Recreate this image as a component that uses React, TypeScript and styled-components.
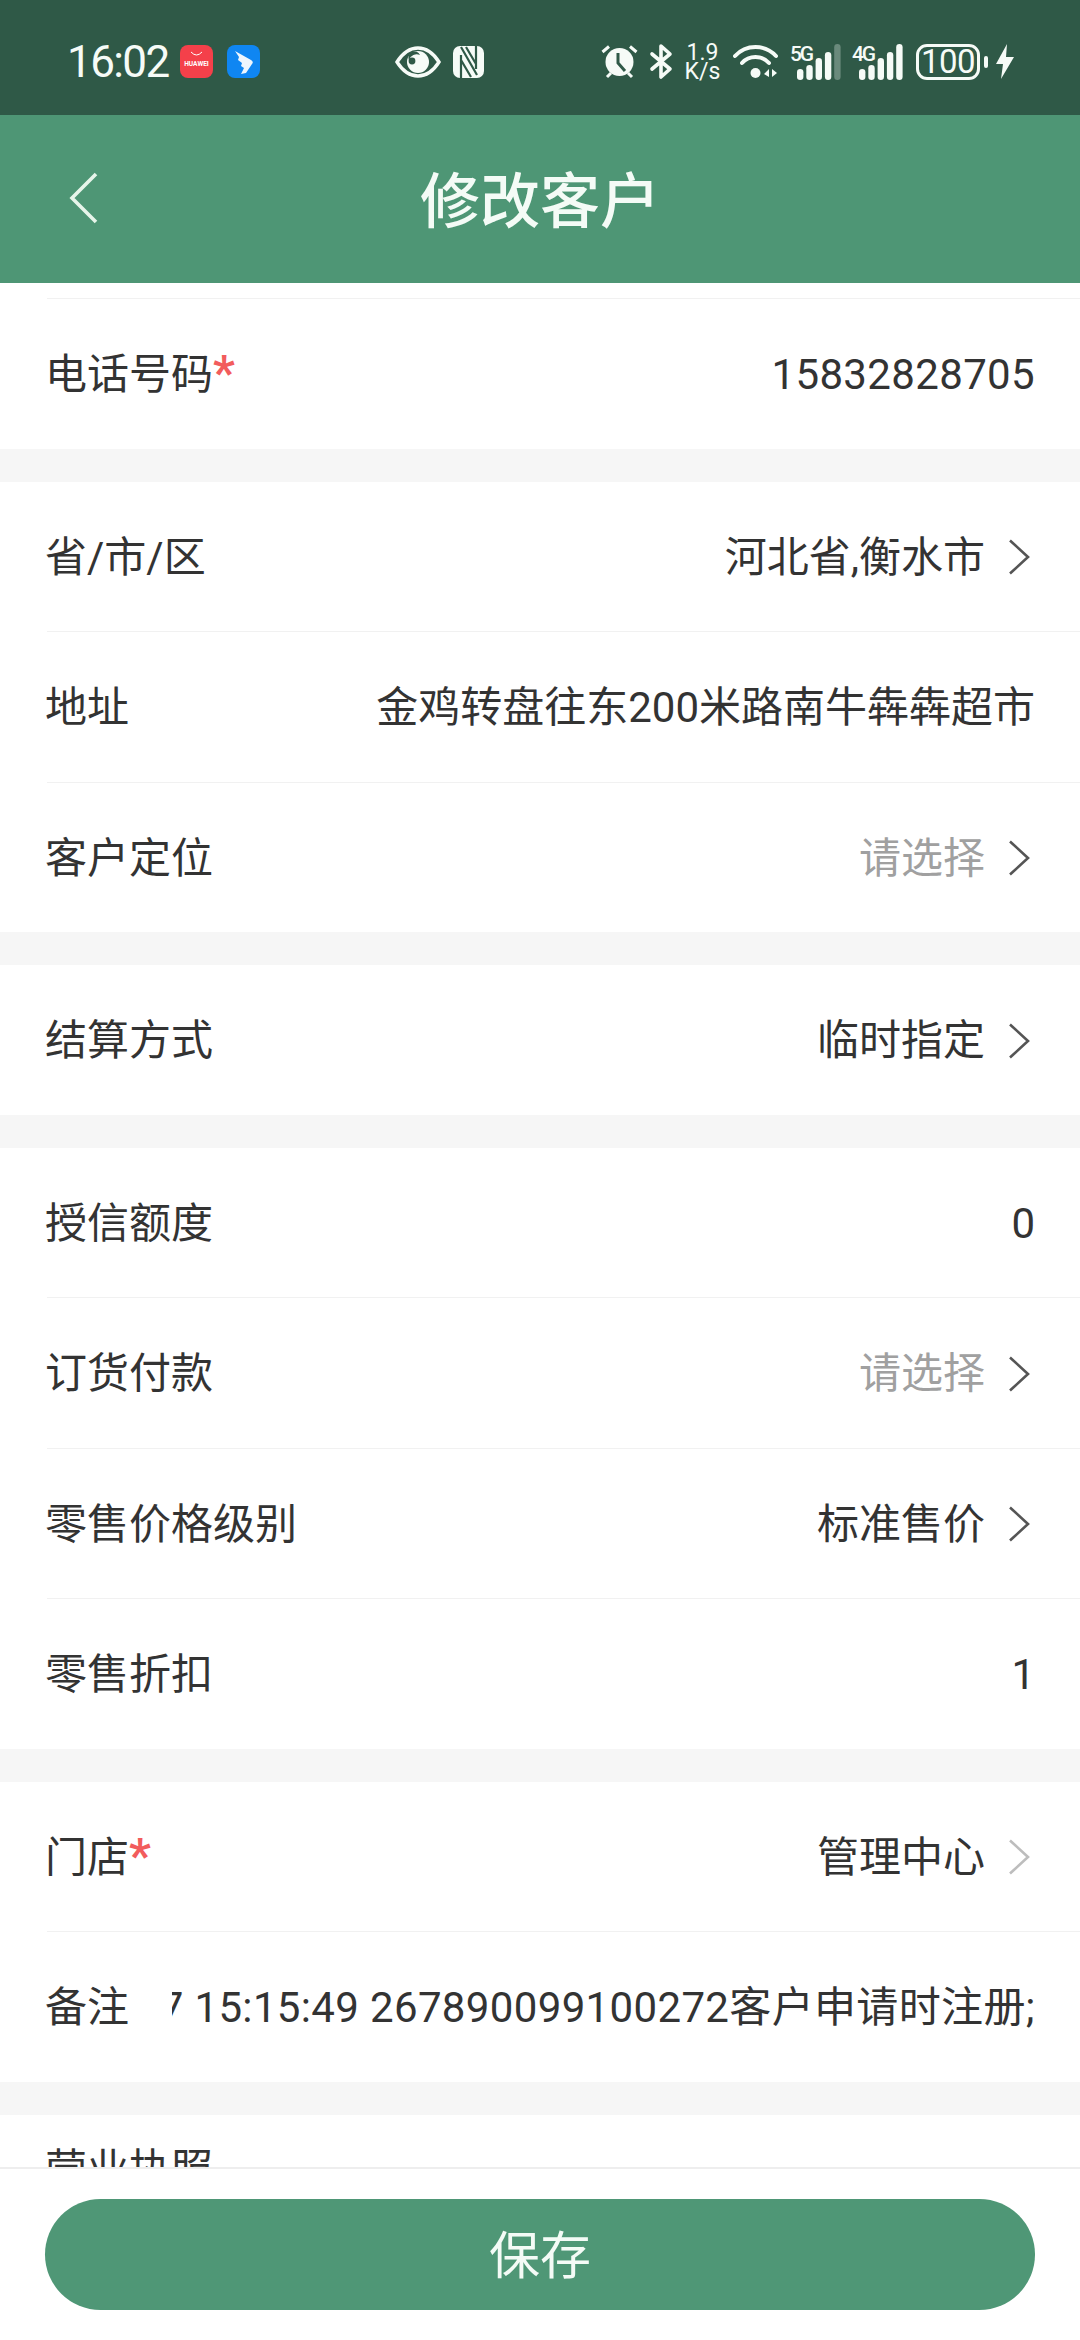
import React from 'react';
import styled, { createGlobalStyle } from 'styled-components';

const rowHeight = 149.5;

const GlobalStyle = createGlobalStyle`
  html, body {
    margin: 0;
    padding: 0;
    background: #ffffff;
  }
  * {
    box-sizing: border-box;
  }
`;

const Page = styled.div`
  width: 1080px;
  height: 2340px;
  display: flex;
  flex-direction: column;
  overflow: hidden;
  background: #f6f6f6;
  font-family: Roboto, 'Noto Sans CJK SC', sans-serif;
  color: #333333;
`;

const StatusBar = styled.div`
  height: 115px;
  flex-shrink: 0;
  background: #2f5947;
  color: #f6fbf7;
  display: flex;
  align-items: center;
  padding: 8px 0 0 67px;
  font-family: Roboto, sans-serif;
`;

const StatusCluster = styled.div<{ $left: number; $gap: number }>`
  display: flex;
  align-items: center;
  margin-left: ${(props) => props.$left}px;
  gap: ${(props) => props.$gap}px;
`;

const Clock = styled.span`
  font-size: 44px;
  width: 101px;
  line-height: 46px;
  letter-spacing: -1.6px;
  white-space: nowrap;
`;

const AppIcon = styled.svg`
  display: block;
  flex-shrink: 0;
  overflow: visible;
`;

const Speed = styled.div`
  width: 37px;
  display: flex;
  flex-direction: column;
  align-items: center;
  font-size: 23px;
  line-height: 19px;
`;

const Battery = styled.div`
  width: 64px;
  height: 36px;
  margin-left: 2px;
  border: 3px solid #f6fbf7;
  border-radius: 11px;
  display: flex;
  align-items: center;
  justify-content: center;
  font-size: 33px;
  letter-spacing: -0.5px;
`;

const BatteryNub = styled.div`
  width: 4px;
  height: 12px;
  border-radius: 2px;
  background: #f6fbf7;
  margin-left: -8px;
  margin-right: -4px;
`;

const Header = styled.header`
  height: 168px;
  flex-shrink: 0;
  background: #4e9675;
  display: flex;
  align-items: center;
  justify-content: center;
  position: relative;
`;

const BackButton = styled.button`
  position: absolute;
  left: 68px;
  top: 57px;
  padding: 0;
  border: none;
  background: none;
  display: flex;
`;

const Title = styled.h1`
  margin: 0 0 6px;
  font-size: 60px;
  font-weight: 500;
  color: #f4fbf6;
`;

const Body = styled.main`
  flex: 1;
  min-height: 0;
  overflow: hidden;
  display: flex;
  flex-direction: column;
  gap: 33px;
`;

const Group = styled.section`
  background: #ffffff;
  flex-shrink: 0;
`;

const ClippedRow = styled.div`
  height: 15px;
`;

const Row = styled.div`
  height: ${rowHeight}px;
  margin-left: 47px;
  padding-right: 45px;
  display: flex;
  align-items: center;
  box-sizing: content-box;

  & + &,
  ${ClippedRow} + & {
    border-top: 1px solid #f1f1f1;
  }
`;

const UploadRow = styled(Row)`
  align-items: flex-start;
  padding-top: 27px;
`;

const Label = styled.span`
  flex-shrink: 0;
  width: 127px;
  margin-left: -2px;
  padding-top: 3px;
  font-size: 42px;
  line-height: 50px;
  white-space: nowrap;
`;

const Required = styled.span`
  color: #f25c5c;
  font-size: 48px;
  font-weight: 700;
  line-height: 0;
`;

const Value = styled.div<{ $placeholder?: boolean }>`
  flex: 1;
  min-width: 0;
  display: flex;
  justify-content: flex-end;
  align-items: center;
  overflow: hidden;
  white-space: nowrap;
  padding-top: 3px;
  font-size: 42px;
  line-height: 50px;
  color: ${(props) => (props.$placeholder ? '#a0a0a0' : '#333333')};
`;

const ValueText = styled.span`
  flex-shrink: 0;
  letter-spacing: 0.35px;
`;

const Arrow = styled.svg`
  flex-shrink: 0;
  display: block;
  margin: 2px 5px 0 23px;
`;

const Footer = styled.footer`
  height: 173px;
  flex-shrink: 0;
  background: #ffffff;
  border-top: 2px solid #eeeeee;
  padding: 30px 45px 0;
`;

const SaveButton = styled.button`
  display: block;
  width: 100%;
  height: 111px;
  border: none;
  border-radius: 56px;
  padding: 0 0 6px;
  background: #4f9776;
  color: #f4fbf6;
  font-family: 'Noto Sans CJK SC', sans-serif;
  font-size: 51px;
`;

const Chevron = ({ faded }: { faded?: boolean }) => (
  <Arrow width="22" height="36" viewBox="0 0 22 36">
    <path
      d="M2 1.5 L20 18 L2 34.5"
      fill="none"
      stroke={faded ? '#bdbdbd' : '#555555'}
      strokeWidth="2.6"
    />
  </Arrow>
);

const HuaweiIcon = () => (
  <AppIcon width="33" height="33" viewBox="0 0 33 33">
    <rect width="33" height="33" rx="8" fill="#f4404a" />
    <path d="M11 7 Q16.5 13 22 7" fill="none" stroke="#ffffff" strokeWidth="1" />
    <text
      x="16.5"
      y="21"
      textAnchor="middle"
      fontSize="6.6"
      fontWeight="700"
      fontFamily="Roboto, sans-serif"
      fill="#ffffff"
    >
      HUAWEI
    </text>
  </AppIcon>
);

const DingIcon = () => (
  <AppIcon width="33" height="33" viewBox="0 0 33 33">
    <rect width="33" height="33" rx="8" fill="#0f86f2" />
    <path
      d="M8 6 L24 15 Q27 17 25 19 L19 28 L14 29 L17 23 L14 21 L15 18 L11 15 L12 12 Z"
      fill="#eef6fd"
    />
  </AppIcon>
);

const EyeIcon = () => (
  <AppIcon width="46" height="32" viewBox="0 0 46 32">
    <path
      d="M2 16 C9 5 16 2 23 2 C30 2 37 5 44 16 C37 27 30 30 23 30 C16 30 9 27 2 16 Z"
      fill="none"
      stroke="#f6fbf7"
      strokeWidth="3.4"
    />
    <circle cx="23" cy="16" r="11" fill="#f6fbf7" />
    <path d="M14 14 A8 8 0 0 1 25 9 A6 6 0 0 0 14 14 Z" fill="#2f5947" />
    <circle cx="17" cy="15" r="3.4" fill="#2f5947" />
  </AppIcon>
);

const NfcIcon = () => (
  <AppIcon width="31" height="32" viewBox="0 0 31 32">
    <rect width="31" height="32" rx="7" fill="#f6fbf7" />
    <path
      d="M8 9 V32 M8 1 L24 29 M13 1 L23 18 M23 0 V23 M8 14 L18 31"
      fill="none"
      stroke="#2f5947"
      strokeWidth="2.2"
    />
  </AppIcon>
);

const AlarmIcon = () => (
  <AppIcon width="37" height="35" viewBox="0 0 37 35">
    <circle cx="18.5" cy="18" r="14" fill="#f6fbf7" />
    <path d="M1.5 8 L8 2.5 M35.5 8 L29 2.5 M6 33 L10 29 M31 33 L27 29" stroke="#f6fbf7" strokeWidth="3" />
    <path d="M17 9 V19 L24 27" fill="none" stroke="#2f5947" strokeWidth="3" />
  </AppIcon>
);

const BluetoothIcon = () => (
  <AppIcon width="22" height="35" viewBox="0 0 22 35">
    <path
      d="M2 10 L20 25 L11 33 V2 L20 10 L2 25"
      fill="none"
      stroke="#f6fbf7"
      strokeWidth="3.6"
      strokeLinejoin="round"
      strokeLinecap="round"
    />
  </AppIcon>
);

const WifiIcon = () => (
  <AppIcon width="45" height="35" viewBox="0 0 45 35">
    <path d="M2 12 C13 0 32 0 43 12" fill="none" stroke="#f6fbf7" strokeWidth="4" strokeLinecap="round" />
    <path d="M9 19 C16 11 29 11 36 19" fill="none" stroke="#f6fbf7" strokeWidth="4" strokeLinecap="round" />
    <circle cx="22.5" cy="29" r="5" fill="#f6fbf7" />
    <path d="M36 25 V33 L31 30 Z M39 25 V33 L44 29 Z" fill="#f6fbf7" />
  </AppIcon>
);

const SignalIcon = ({ label, bars, dimLast }: { label: string; bars: number[]; dimLast?: boolean }) => (
  <AppIcon width="50" height="36" viewBox="0 0 50 36">
    <text x="0" y="17" fontSize="21" fontWeight="500" fontFamily="Roboto, sans-serif" fill="#f6fbf7" textLength="24">
      {label}
    </text>
    {bars.map((top, index) => (
      <rect
        key={index}
        x={7 + index * 9.3}
        y={top}
        width="6.4"
        height={36 - top}
        rx="3.2"
        fill="#f6fbf7"
        opacity={dimLast && index === bars.length - 1 ? 0.3 : 1}
      />
    ))}
  </AppIcon>
);

const BoltIcon = () => (
  <AppIcon width="18" height="35" viewBox="0 0 18 35">
    <path d="M11 0 L0 20 H7 L5 35 L18 13 H10 Z" fill="#f6fbf7" />
  </AppIcon>
);

export default function App() {
  return (
    <Page>
      <GlobalStyle />
      <StatusBar>
        <StatusCluster $left={0} $gap={0}>
          <Clock>16:02</Clock>
          <StatusCluster $left={12} $gap={14}>
            <HuaweiIcon />
            <DingIcon />
          </StatusCluster>
        </StatusCluster>
        <StatusCluster $left={135} $gap={12}>
          <EyeIcon />
          <NfcIcon />
        </StatusCluster>
        <StatusCluster $left={117} $gap={12}>
          <AlarmIcon />
          <BluetoothIcon />
          <Speed>
            <span>1.9</span>
            <span>K/s</span>
          </Speed>
          <WifiIcon />
          <SignalIcon label="5G" bars={[25, 21, 14, 8, 0]} dimLast />
          <SignalIcon label="4G" bars={[25, 21, 14, 8, 0]} />
          <Battery>100</Battery>
          <BatteryNub />
          <BoltIcon />
        </StatusCluster>
      </StatusBar>
      <Header>
        <BackButton aria-label="返回">
          <svg width="30" height="52" viewBox="0 0 30 52">
            <path d="M28 2 L4 26 L28 50" fill="none" stroke="#e6f5ea" strokeWidth="3.6" />
          </svg>
        </BackButton>
        <Title>修改客户</Title>
      </Header>
      <Body>
        <Group>
          <ClippedRow />
          <Row>
            <Label>
              电话号码<Required>*</Required>
            </Label>
            <Value>
              <ValueText>15832828705</ValueText>
            </Value>
          </Row>
        </Group>
        <Group>
          <Row>
            <Label>省/市/区</Label>
            <Value>河北省,衡水市</Value>
            <Chevron />
          </Row>
          <Row>
            <Label>地址</Label>
            <Value>金鸡转盘往东200米路南牛犇犇超市</Value>
          </Row>
          <Row>
            <Label>客户定位</Label>
            <Value $placeholder>请选择</Value>
            <Chevron />
          </Row>
        </Group>
        <Group>
          <Row>
            <Label>结算方式</Label>
            <Value>临时指定</Value>
            <Chevron />
          </Row>
        </Group>
        <Group>
          <Row>
            <Label>授信额度</Label>
            <Value>0</Value>
          </Row>
          <Row>
            <Label>订货付款</Label>
            <Value $placeholder>请选择</Value>
            <Chevron />
          </Row>
          <Row>
            <Label>零售价格级别</Label>
            <Value>标准售价</Value>
            <Chevron />
          </Row>
          <Row>
            <Label>零售折扣</Label>
            <Value>1</Value>
          </Row>
        </Group>
        <Group>
          <Row>
            <Label>
              门店<Required>*</Required>
            </Label>
            <Value>管理中心</Value>
            <Chevron faded />
          </Row>
          <Row>
            <Label>备注</Label>
            <Value>
              <ValueText>7 15:15:49 267890099100272客户申请时注册;</ValueText>
            </Value>
          </Row>
        </Group>
        <Group>
          <UploadRow>
            <Label>营业执照</Label>
          </UploadRow>
        </Group>
      </Body>
      <Footer>
        <SaveButton>保存</SaveButton>
      </Footer>
    </Page>
  );
}
